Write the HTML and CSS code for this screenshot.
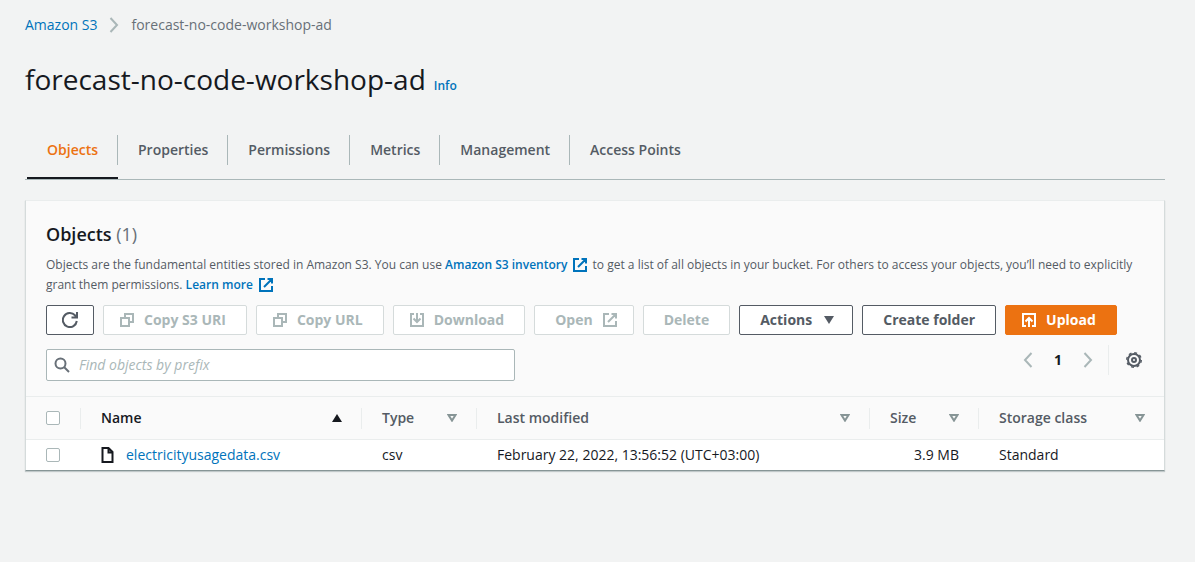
FILE: index.html
```html
<!DOCTYPE html>
<html lang="en">
<head>
<meta charset="utf-8">
<meta name="viewport" content="width=device-width, initial-scale=1">
<title>forecast-no-code-workshop-ad - S3 bucket</title>
<link rel="stylesheet" href="styles.css">
</head>
<body>
<svg class="sprite" aria-hidden="true">
  <symbol id="external" viewBox="0 0 16 16"><path d="M7 2H2v12h12V9M9.500 2H14v4.500M6 10l8-8"/></symbol>
  <symbol id="copy" viewBox="0 0 16 16"><path d="M2 6h8v8H2zM6 6V2h8v8h-4"/></symbol>
  <symbol id="sort" viewBox="0 0 10 8"><path d="M1.500 1h7L5 6.600z"/></symbol>
</svg>
<main class="page">
  <nav class="breadcrumbs" aria-label="Breadcrumbs">
    <a href="#">Amazon S3</a>
    <svg class="chevron" viewBox="0 0 10 16"><path d="M1.500 1L8 8l-6.500 7"/></svg>
    <span>forecast-no-code-workshop-ad</span>
  </nav>
  <header class="title">
    <h1>forecast-no-code-workshop-ad</h1>
    <a class="info" href="#">Info</a>
  </header>
  <nav class="tabs" aria-label="Bucket sections">
    <a class="tab active" href="#" aria-current="page">Objects</a>
    <a class="tab" href="#">Properties</a>
    <a class="tab" href="#">Permissions</a>
    <a class="tab" href="#">Metrics</a>
    <a class="tab" href="#">Management</a>
    <a class="tab" href="#">Access Points</a>
  </nav>
  <section class="panel">
    <div class="panel-head">
      <h2>Objects <span class="count">(1)</span></h2>
      <p class="description">Objects are the fundamental entities stored in Amazon S3. You can use <a href="#">Amazon S3 inventory <svg class="icon"><use href="#external"/></svg></a> to get a list of all objects in your bucket. For others to access your objects, you’ll need to explicitly grant them permissions. <a href="#">Learn more <svg class="icon"><use href="#external"/></svg></a></p>
      <div class="actions">
        <button class="btn refresh" type="button" aria-label="Refresh"><svg class="icon" viewBox="0 0 16 16"><path d="M14.800 9A7 7 0 1 1 13 3.300L14.500 5M15 0v5.500H9.500"/></svg></button>
        <button class="btn" type="button" disabled><svg class="icon lead"><use href="#copy"/></svg>Copy S3 URI</button>
        <button class="btn" type="button" disabled><svg class="icon lead"><use href="#copy"/></svg>Copy URL</button>
        <button class="btn" type="button" disabled><svg class="icon lead" viewBox="0 0 16 16"><path d="M5 2H2v12h12V2h-3M8 1v9M4.500 6.500L8 10l3.500-3.500"/></svg>Download</button>
        <button class="btn" type="button" disabled>Open<svg class="icon trail"><use href="#external"/></svg></button>
        <button class="btn" type="button" disabled>Delete</button>
        <button class="btn" type="button">Actions<svg class="caret" viewBox="0 0 10 8"><path d="M0 0h10L5 8z"/></svg></button>
        <button class="btn" type="button">Create folder</button>
        <button class="btn primary" type="button"><svg class="icon lead" viewBox="0 0 16 16"><path d="M5 14H2V2h12v12h-3M8 15V6M4.500 9.500L8 6l3.500 3.500"/></svg>Upload</button>
      </div>
      <div class="filter-row">
        <label class="search">
          <svg class="icon" viewBox="0 0 16 16"><circle cx="6.500" cy="6.500" r="5"/><path d="M10 10l5 5"/></svg>
          <input type="text" placeholder="Find objects by prefix" aria-label="Find objects by prefix">
        </label>
        <div class="pagination">
          <button class="page-btn" type="button" aria-label="Previous page"><svg class="chevron" viewBox="0 0 10 16"><path d="M8.500 1L2 8l6.500 7"/></svg></button>
          <button class="page-btn current" type="button">1</button>
          <button class="page-btn" type="button" aria-label="Next page"><svg class="chevron" viewBox="0 0 10 16"><path d="M1.500 1L8 8l-6.500 7"/></svg></button>
          <button class="page-btn settings" type="button" aria-label="Preferences"><svg class="icon" viewBox="0 0 16 16"><circle cx="8" cy="8" r="6"/><circle class="teeth" cx="8" cy="8" r="7.300"/><circle cx="8" cy="8" r="2"/></svg></button>
        </div>
      </div>
    </div>
    <table class="objects">
      <colgroup><col class="c-check"><col class="c-name"><col class="c-type"><col><col class="c-size"><col class="c-class"></colgroup>
      <thead>
        <tr>
          <th><div class="cell"><input type="checkbox" aria-label="Select all objects"></div></th>
          <th class="sorted"><div class="cell">Name<svg class="caret" viewBox="0 0 10 8"><path d="M0 8h10L5 0z"/></svg></div></th>
          <th><div class="cell">Type<svg class="sort"><use href="#sort"/></svg></div></th>
          <th><div class="cell">Last modified<svg class="sort"><use href="#sort"/></svg></div></th>
          <th><div class="cell">Size<svg class="sort"><use href="#sort"/></svg></div></th>
          <th><div class="cell">Storage class<svg class="sort"><use href="#sort"/></svg></div></th>
        </tr>
      </thead>
      <tbody>
        <tr>
          <td><input type="checkbox" aria-label="Select electricityusagedata.csv"></td>
          <td><a class="file" href="#"><svg class="doc" viewBox="0 0 12 16"><path d="M1 1h6l4 4v10H1zM7 1v4.500h4"/></svg>electricityusagedata.csv</a></td>
          <td>csv</td>
          <td>February 22, 2022, 13:56:52 (UTC+03:00)</td>
          <td class="number">3.9 MB</td>
          <td>Standard</td>
        </tr>
      </tbody>
    </table>
  </section>
</main>
</body>
</html>
```
FILE: styles.css
```css
* { box-sizing: border-box; }
body {
  margin: 0;
  background: #f2f3f3;
  color: #16191f;
  font: 14px/20px "Open Sans", "Noto Sans", sans-serif;
}
a { color: #0073bb; text-decoration: none; }
button, input { font: inherit; }
svg { flex: none; fill: none; stroke: currentColor; stroke-width: 2; }
.sprite { position: absolute; width: 0; height: 0; }
.icon { width: 16px; height: 16px; }
.chevron { width: 10px; height: 16px; color: #aab7b8; }
.caret { width: 10px; height: 8px; fill: currentColor; stroke: none; }
.page { padding: 15px 30px 20px 25px; }

.breadcrumbs { display: flex; align-items: center; gap: 12px; color: #687078; }
.title { display: flex; align-items: baseline; gap: 8px; margin-top: 26px; }
h1 { margin: 0; font-size: 28px; line-height: 36px; font-weight: 400; }
.info { font-size: 12px; font-weight: 600; }

.tabs { display: flex; margin-top: 22px; padding-left: 2px; border-bottom: 1px solid #aab7b8; }
.tab {
  position: relative;
  padding: 21px 20px 19px;
  color: #545b64;
  font-weight: 600;
}
.tab:not(:last-child)::after {
  content: "";
  position: absolute;
  top: 16px;
  right: 0;
  height: 30px;
  border-right: 1px solid #aab7b8;
}
.tab.active { color: #ec7211; box-shadow: inset 0 -2px #16191f; }

.panel {
  margin-top: 20px;
  background: #fff;
  border: 1px solid #d5dbdb;
  border-top-color: #eaeded;
  border-bottom-color: #879596;
  box-shadow: 0 1px 1px rgba(0, 28, 36, .2);
}
.panel-head { padding: 21px 20px 15px; background: #fafafa; }
h2 { margin: 0; font-size: 18px; line-height: 24px; font-weight: 600; }
.count { color: #687078; font-weight: 400; }
.description { margin: 9px 0 10px; color: #545b64; font-size: 12px; }
.description a { font-weight: 600; }
.description .icon { margin: 0 1px 0 2px; vertical-align: -4px; }

.actions { display: flex; flex-wrap: wrap; gap: 9px; }
.btn {
  display: flex;
  align-items: center;
  justify-content: center;
  gap: 9px;
  height: 30px;
  padding: 0 20px;
  border: 1px solid #545b64;
  border-radius: 2px;
  background: #fff;
  color: #545b64;
  font-weight: 700;
}
.btn .lead { margin-left: -5px; }
.btn .trail { margin-right: -5px; }
.btn .caret { margin: 0 -2px 0 3px; }
.btn.refresh { width: 48px; }
.btn:disabled { color: #aab7b8; border-color: #d5dbdb; }
.btn.primary { color: #fff; background: #ec7211; border-color: #ec7211; }

.filter-row { display: flex; justify-content: space-between; margin-top: 14px; }
.search {
  display: flex;
  align-items: center;
  gap: 9px;
  width: 42.7%;
  height: 32px;
  padding: 0 7px;
  border: 1px solid #aab7b8;
  border-radius: 2px;
  background: #fff;
  color: #687078;
}
.search input { flex: 1; min-width: 0; padding: 0; border: 0; outline: 0; background: none; }
.search input::placeholder { color: #aab7b8; font-style: italic; opacity: 1; }
.pagination { display: flex; height: 22px; align-items: center; }
.page-btn {
  display: flex;
  justify-content: center;
  align-items: center;
  width: 30px;
  height: 30px;
  padding: 0;
  border: 0;
  background: none;
  color: #545b64;
}
.page-btn.current { color: #16191f; font-weight: 700; }
.page-btn.settings { width: 36px; margin-left: 5px; padding-left: 15px; border-left: 1px solid #eaeded; }
.teeth { stroke-width: 1.400; stroke-dasharray: 2.900 2.833; }

.objects { width: 100%; table-layout: fixed; border-collapse: collapse; }
.c-check { width: 55px; }
.c-name { width: 281px; }
.c-type { width: 115px; }
.c-size { width: 109px; }
.c-class { width: 185px; }
th {
  height: 43px;
  padding: 0;
  background: #fafafa;
  border: solid #eaeded;
  border-width: 1px 0;
  color: #545b64;
  font-weight: 600;
  text-align: left;
}
th.sorted { color: #16191f; }
.cell {
  display: flex;
  align-items: center;
  justify-content: space-between;
  height: 21px;
  padding: 0 19px 0 20px;
  border-right: 1px solid #eaeded;
}
th:last-child .cell { border-right: 0; }
.sort { width: 10px; height: 8px; color: #879596; }
td { height: 30px; padding: 0 20px; }
td.number { text-align: right; }
input[type="checkbox"] {
  appearance: none;
  display: block;
  width: 14px;
  height: 14px;
  margin: 0;
  border: 1px solid #aab7b8;
  border-radius: 2px;
  background: #fff;
}
.file { display: flex; align-items: center; gap: 12px; }
.doc { width: 13px; height: 16px; color: #16191f; }
```
